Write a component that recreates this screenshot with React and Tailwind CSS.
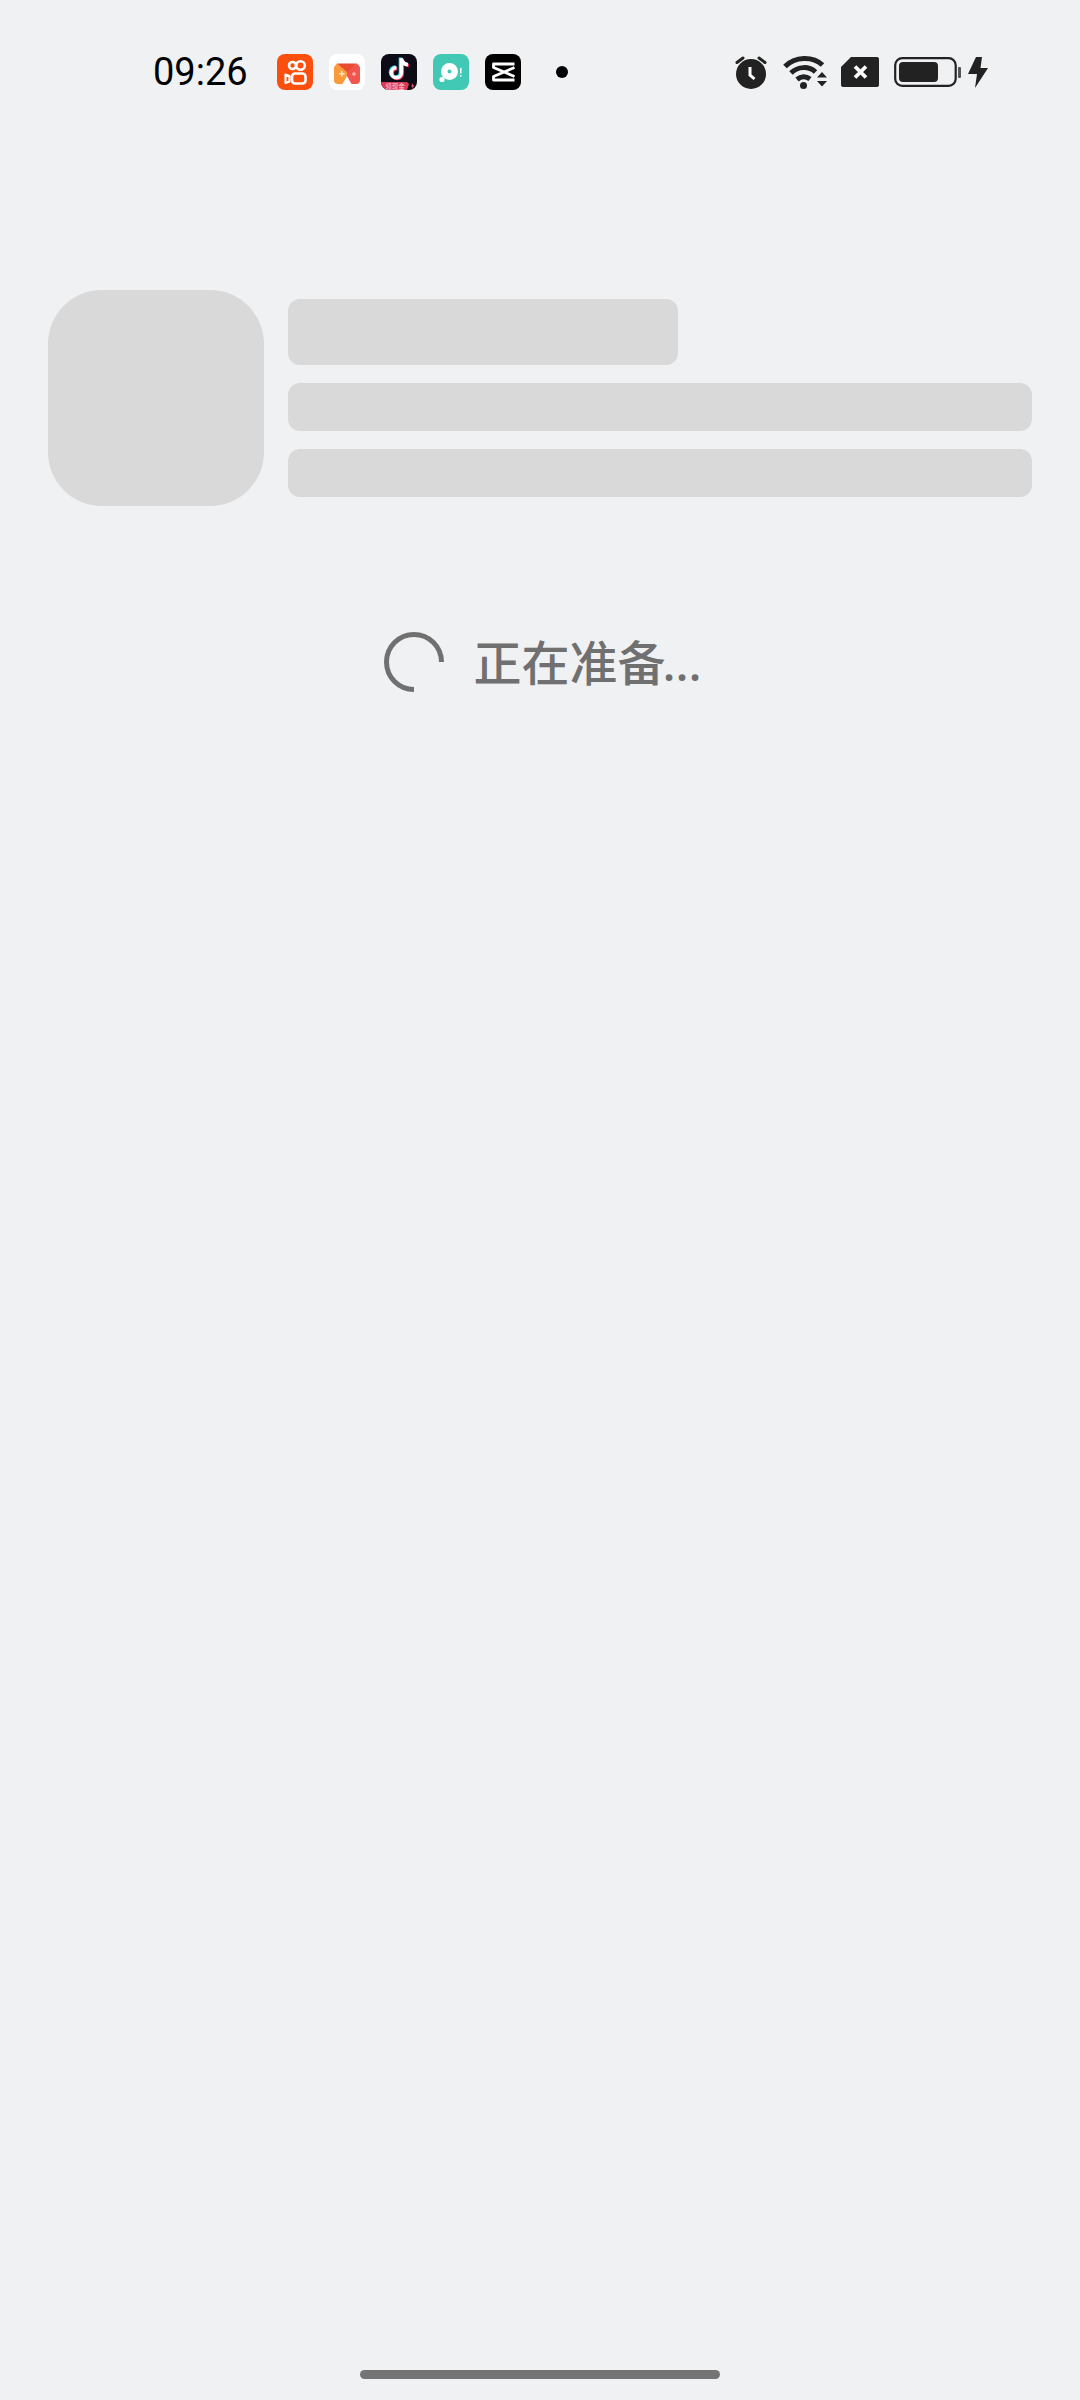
import React from "react";

// App icons in the status bar
const KuaishouIcon = () => (
  <svg width="36" height="36" viewBox="0 0 36 36">
    <rect width="36" height="36" rx="8" fill="#fb4f0e" />
    <g fill="none" stroke="#fff" strokeWidth="2.600">
      <circle cx="15.500" cy="11.500" r="3.500" />
      <circle cx="23.500" cy="11.500" r="4.300" />
      <rect x="15" y="19.500" width="13.500" height="10" rx="3" />
    </g>
    <path d="M12.500 22v5.500l-4 1.500v-8.500z" fill="none" stroke="#fff" strokeWidth="2.200" strokeLinejoin="round" />
  </svg>
);

const GameIcon = () => (
  <svg width="36" height="36" viewBox="0 0 36 36">
    <rect width="36" height="36" rx="8" fill="#fff" />
    <path d="M5 13 8 9.500 18 16.500V22l-4.500 8H9a4 4 0 0 1-4-4z" fill="#fb9a3a" />
    <path d="M31 13 28 9.500 18 16.500V22l4.500 8H27a4 4 0 0 0 4-4z" fill="#f2554e" />
    <path d="M8 9.500h20L18 18z" fill="#ea4a2e" />
    <path d="M10 19h2v-2h1.600v2h2v1.600h-2v2H12v-2h-2z" fill="#ffe9c9" />
    <circle cx="25" cy="20" r="1.800" fill="#ffb3a8" />
  </svg>
);

const TiktokIcon = () => (
  <svg width="36" height="36" viewBox="0 0 36 36">
    <rect width="36" height="36" rx="8" fill="#0d0b16" />
    <g fill="none" strokeWidth="3.600">
      <path d="M19.500 3.500v14.500a5 5 0 1 1-5-5M19.500 4c.4 3.400 2.800 5.600 6.500 6" stroke="#39e0e4" />
      <path d="M21.300 5v14.500a5 5 0 1 1-5-5M21.300 5.500c.4 3.400 2.800 5.600 6.500 6" stroke="#f5325c" />
      <path d="M20.400 4.200v14.500a5 5 0 1 1-5-5M20.400 4.700c.4 3.400 2.800 5.600 6.500 6" stroke="#fff" />
    </g>
    <path d="M0 28h26l2 2-2 6H8a8 8 0 0 1-8-8z" fill="#d93a56" />
    <text x="14" y="34.500" textAnchor="middle" fontSize="6.500" fill="#ffd8dc" fontFamily="'Noto Sans CJK SC', sans-serif">
      领现金
    </text>
    <path d="M32 29l-2 3.500h1.500l-.5 2.500 2.500-3.500H32z" fill="#f5576f" />
  </svg>
);

const MusicIcon = () => (
  <svg width="36" height="36" viewBox="0 0 36 36">
    <rect width="36" height="36" rx="8" fill="#41c9b5" />
    <circle cx="16.500" cy="17.500" r="8.500" fill="#fff" />
    <circle cx="16.500" cy="17.500" r="2" fill="#41c9b5" />
    <circle cx="9" cy="25.500" r="2.600" fill="#fff" />
    <path d="M27.800 14.500v4.500" stroke="#fff" strokeWidth="1.500" strokeLinecap="round" />
    <circle cx="27.800" cy="21.800" r=".9" fill="#fff" />
  </svg>
);

const CapcutIcon = () => (
  <svg width="36" height="36" viewBox="0 0 36 36">
    <rect width="36" height="36" rx="8" fill="#000" />
    <path
      d="M29.500 10H8.500v3.500l21 9M29.500 13.500l-21 9V26h21"
      fill="none"
      stroke="#fff"
      strokeWidth="2.800"
      strokeLinejoin="round"
    />
  </svg>
);

// System icons on the right of the status bar
const AlarmIcon = () => (
  <svg width="32" height="34" viewBox="0 0 32 34">
    <circle cx="16" cy="19" r="15" fill="#222" />
    <path d="M2 7.500 8 3M30 7.500 24 3" stroke="#222" strokeWidth="3" strokeLinecap="round" />
    <path d="M15 12v8l4.500 4" fill="none" stroke="#fff" strokeWidth="3" />
  </svg>
);

const WifiIcon = () => (
  <svg width="46" height="35" viewBox="0 0 46 35">
    <g fill="none" stroke="#222" strokeWidth="5">
      <path d="M2 11.500C12 1 30 1 39.500 10" />
      <path d="M8 18C15 11 26 11 32.500 17" />
      <path d="M14 24.500c4-3.500 9-3.500 13-.5" />
    </g>
    <circle cx="20.500" cy="30.500" r="3.500" fill="#222" />
    <path d="M34 22.500h10l-5-5.500zM34 26h10l-5 5.500z" fill="#222" />
  </svg>
);

const SimIcon = () => (
  <svg width="38" height="30" viewBox="0 0 38 30">
    <path d="M10 0h26a2 2 0 0 1 2 2v26a2 2 0 0 1-2 2H2a2 2 0 0 1-2-2V10z" fill="#222" />
    <path d="M14 9.500l11 11M25 9.500 14 20.500" stroke="#fff" strokeWidth="3.800" />
  </svg>
);

const BatteryIcon = () => (
  <svg width="67" height="30" viewBox="0 0 67 30">
    <rect x="1.200" y="1.200" width="60.500" height="27.600" rx="7" fill="none" stroke="#222" strokeWidth="2.200" />
    <rect x="5" y="5" width="39" height="20" rx="4" fill="#222" />
    <rect x="64" y="10" width="3" height="11" rx="1" fill="#555" />
  </svg>
);

const BoltIcon = () => (
  <svg width="20" height="31" viewBox="0 0 20 31">
    <path d="M8 0h6l-1.500 11H20L7 31l2-14H0z" fill="#222" />
  </svg>
);

const App = () => {
  return (
    <div className="flex flex-col h-[2400px] w-full bg-[#f0f1f3]">
      {/* Status bar */}
      <div className="flex items-center h-[36px] mt-[54px] pl-[153px] pr-[92px]">
        <span className="w-[124px] text-[38px] leading-none text-black font-['Roboto',sans-serif]">09:26</span>
        <div className="flex items-center gap-4">
          <KuaishouIcon />
          <GameIcon />
          <TiktokIcon />
          <MusicIcon />
          <CapcutIcon />
          <div className="ml-[19px] w-3 h-3 rounded-full bg-black" />
        </div>
        <div className="ml-auto flex items-center">
          <AlarmIcon />
          <div className="ml-4"><WifiIcon /></div>
          <div className="ml-[12px]"><SimIcon /></div>
          <div className="ml-[15px]"><BatteryIcon /></div>
          <div className="ml-[7px]"><BoltIcon /></div>
        </div>
      </div>

      {/* Skeleton */}
      <div className="flex items-center gap-6 mt-[200px] px-12">
        <div className="w-[216px] h-[216px] rounded-[54px] bg-[#d9d9d9] shrink-0" />
        <div className="flex flex-col flex-1">
          <div className="w-[390px] h-[66px] rounded-xl bg-[#d9d9d9]" />
          <div className="h-12 mt-[18px] rounded-xl bg-[#d9d9d9]" />
          <div className="h-12 mt-[18px] rounded-xl bg-[#d9d9d9]" />
        </div>
      </div>

      {/* Loading */}
      <div className="flex items-center justify-center gap-[29px] pl-[6px] mt-[126px]">
        <svg width="60" height="60" viewBox="0 0 60 60" fill="none">
          <path d="M57.500 30A27.500 27.500 0 1 0 30 57.500" stroke="#707070" strokeWidth="5" />
        </svg>
        <span className="pt-[2px] text-[48px] leading-none font-medium text-[#707070] font-['Noto_Sans','Noto_Sans_CJK_SC',sans-serif]">
          正在准备<span className="-ml-[3px]">...</span>
        </span>
      </div>

      {/* Home bar */}
      <div className="mt-auto mb-[21px] mx-auto w-[360px] h-[9px] rounded-full bg-[#747474]" />
    </div>
  );
};

export default App;
